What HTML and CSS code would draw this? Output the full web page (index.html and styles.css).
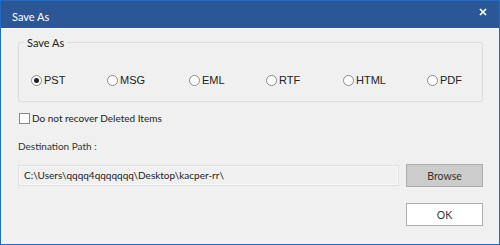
FILE: index.html
```html
<!DOCTYPE html>
<html lang="en">
<head>
    <meta charset="UTF-8">
    <title>Save As</title>
    <link rel="stylesheet" href="styles.css">
</head>
<body>
    <div class="window">
        <div class="titlebar">
            <span class="title">Save As</span>
            <span class="close">
                <svg width="8" height="8" viewBox="0 0 8 8">
                    <path d="M1 1 L7 7 M7 1 L1 7" stroke="#fff" stroke-width="1.7"/>
                </svg>
            </span>
        </div>
        <div class="content">
            <fieldset class="group">
                <legend>Save As</legend>
                <div class="radios">
                    <label class="radio"><span class="dot checked"></span>PST</label>
                    <label class="radio"><span class="dot"></span>MSG</label>
                    <label class="radio"><span class="dot"></span>EML</label>
                    <label class="radio"><span class="dot"></span>RTF</label>
                    <label class="radio"><span class="dot"></span>HTML</label>
                    <label class="radio"><span class="dot"></span>PDF</label>
                </div>
            </fieldset>

            <label class="check"><span class="box"></span>Do not recover Deleted Items</label>

            <div class="dest-label">Destination Path :</div>
            <div class="path-row">
                <div class="path">C:\Users\qqqq4qqqqqqq\Desktop\kacper-rr\</div>
                <button class="btn browse">Browse</button>
            </div>
            <div class="ok-row">
                <button class="btn ok">OK</button>
            </div>
        </div>
    </div>
</body>
</html>
```

FILE: styles.css
```css
body {
    margin: 0;
    width: 500px;
    height: 245px;
    overflow: hidden;
    font-family: Lato, "Liberation Sans", sans-serif;
    font-size: 10px;
    line-height: 13px;
    color: #333;
}

.window {
    box-sizing: border-box;
    width: 500px;
    height: 245px;
    border: 1px solid #1e6dc8;
    border-top: none;
    background: #f0f0f0;
    display: flex;
    flex-direction: column;
}

.titlebar {
    height: 27px;
    background: #2b5797;
    color: #fff;
    display: flex;
    align-items: center;
    justify-content: space-between;
    padding: 0 12px 0 11px;
    border-top: 1px solid #1e6dc8;
    border-bottom: 1px solid #fafafa;
}

.title {
    font-size: 11px;
    margin-top: 4px;
}

.close {
    display: flex;
    margin-top: -5px;
}

.content {
    padding: 0 16px 0 17px;
}

.group {
    margin: 7px 0 0 0;
    padding: 0 0 14px 12px;
    border: 1px solid #dcdcdc;
    border-radius: 3px;
}

.group legend {
    padding: 0 3px;
    margin-left: -7px;
    color: #222;
    font-size: 11px;
}

.radios {
    display: grid;
    grid-template-columns: 76px 82px 77px 77px 84px 1fr;
    margin-top: 25px;
}

.radio {
    display: flex;
    align-items: center;
    font-family: "Liberation Sans", Arial, sans-serif;
    font-size: 11px;
    color: #222;
}

.dot {
    box-sizing: border-box;
    width: 11px;
    height: 11px;
    border: 1px solid #8a8a8a;
    border-radius: 50%;
    background: #fff;
    margin-right: 2px;
    display: flex;
    align-items: center;
    justify-content: center;
}

.dot.checked::after {
    content: "";
    width: 5px;
    height: 5px;
    border-radius: 50%;
    background: #222;
}

.check {
    display: flex;
    align-items: center;
    margin-top: 10px;
    margin-left: 1px;
    color: #222;
}

.box {
    box-sizing: border-box;
    width: 11px;
    height: 11px;
    border: 1px solid #8a8a8a;
    background: #fff;
    margin-right: 2px;
}

.dest-label {
    margin-top: 15px;
}

.path-row {
    display: flex;
    align-items: center;
    justify-content: space-between;
    margin-top: 11px;
}

.path {
    box-sizing: border-box;
    width: 381px;
    height: 21px;
    border: 1px solid #e0e0e0;
    box-shadow: inset 0 0 0 1px #f7f7f7;
    background: #f0f0f0;
    padding: 3px 5px;
    color: #222;
}

.btn {
    box-sizing: border-box;
    width: 77px;
    height: 23px;
    border: 1px solid #adadad;
    font-family: inherit;
    font-size: 10.5px;
    color: #333;
    padding: 0;
}

.browse {
    background: #cccccc;
}

.ok-row {
    display: flex;
    justify-content: flex-end;
    margin-top: 16px;
}

.ok {
    background: #fff;
}
```
